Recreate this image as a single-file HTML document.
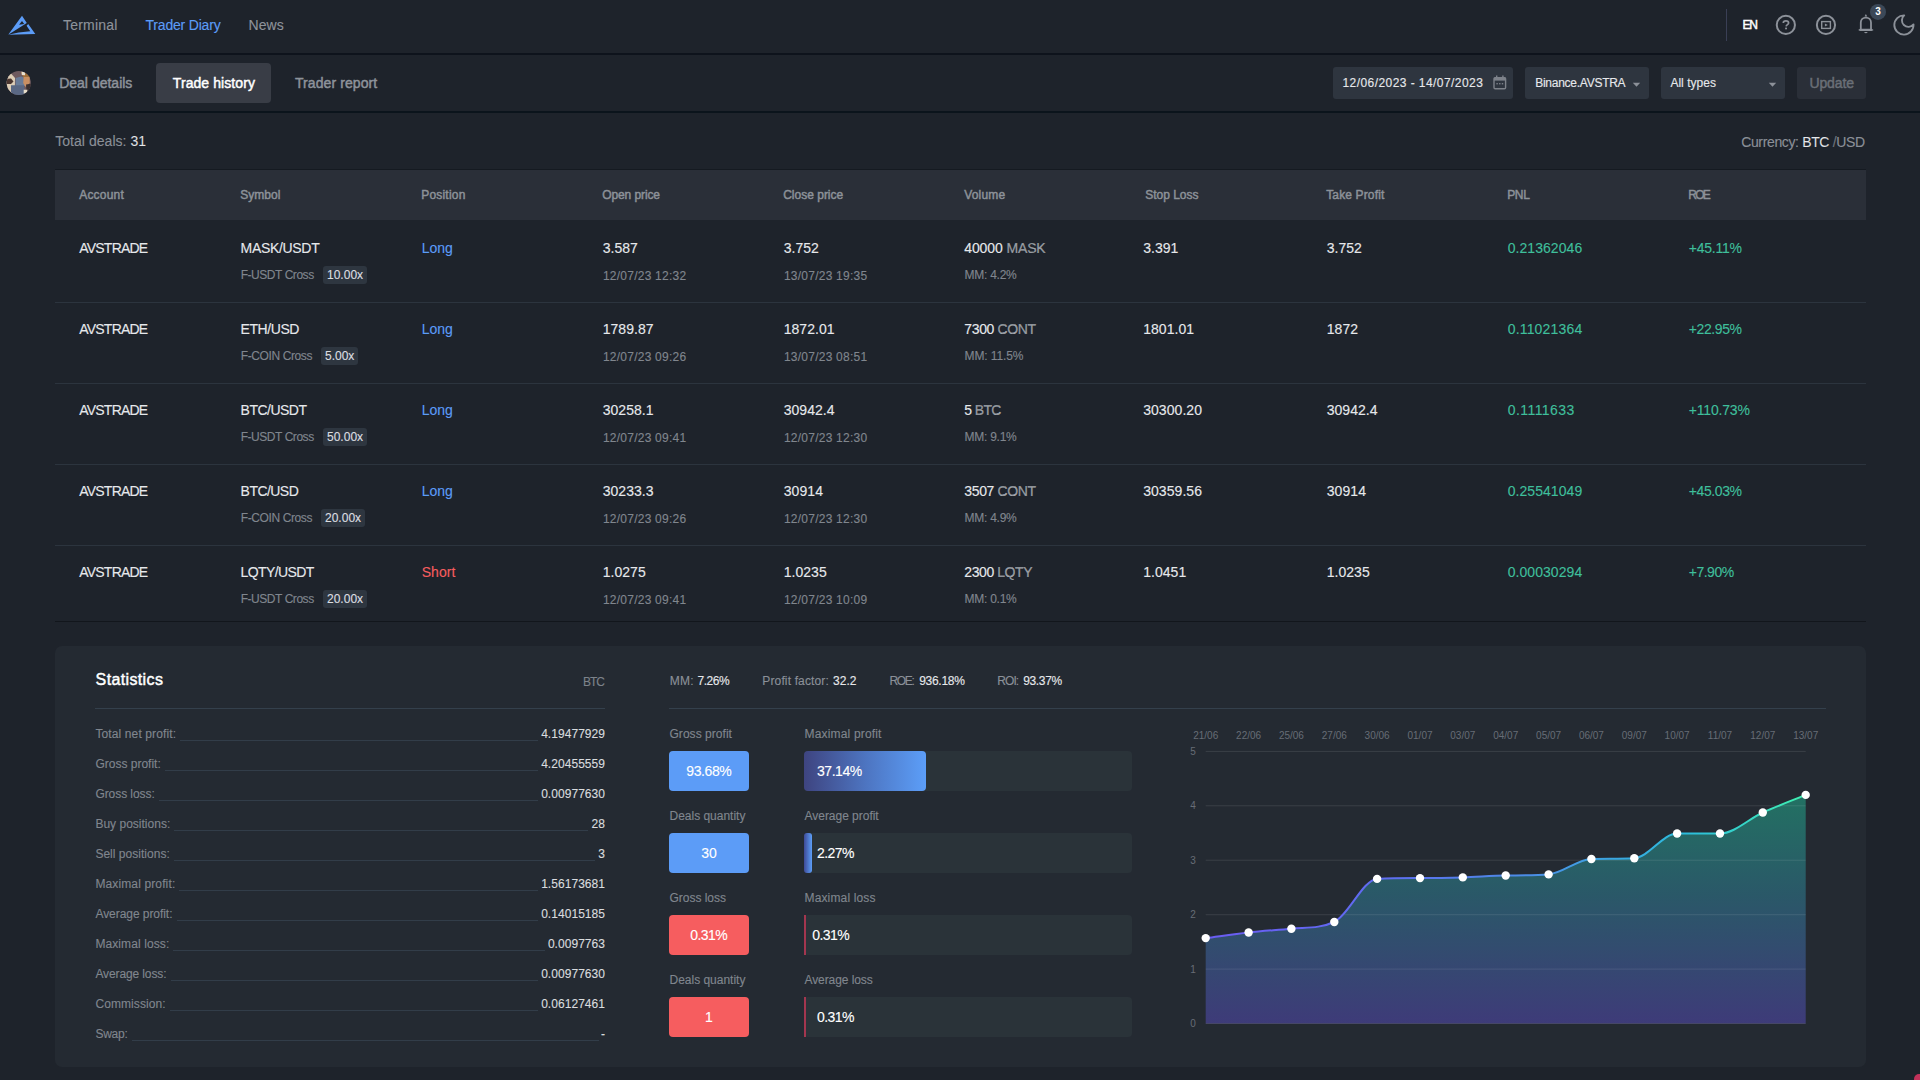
<!DOCTYPE html>
<html><head><meta charset="utf-8"><title>Trader Diary</title>
<style>
html,body{margin:0;padding:0;}
body{width:1920px;height:1080px;overflow:hidden;background:#1e232b;font-family:"Liberation Sans", sans-serif;position:relative;}
.t{position:absolute;white-space:nowrap;}
.r{position:absolute;}
</style></head><body>
<div class="r" style="left:0px;top:53px;width:1920px;height:2px;background:#0e131c;border-radius:0px;"></div>
<div class="r" style="left:0px;top:111px;width:1920px;height:2px;background:#0b141c;border-radius:0px;"></div>
<svg class="r" style="left:0px;top:0px" width="44" height="44" viewBox="0 0 44 44">
<path d="M22 15.8 L26.8 22.9 L8.2 34.7 Z M22 20.9 L19 24.7 L24.2 23.9 Z" fill="#5c9cf7" fill-rule="evenodd"/>
<path d="M28.2 24 L35.3 33.9 L8.2 34.7 Q18 32.3 30.3 31.3 L26.6 25.8 Z" fill="#5c9cf7"/>
</svg>
<div class="t" style="left:63px;top:18.15px;font-size:14px;line-height:14px;color:#8e939b;font-weight:400;letter-spacing:0.196px;-webkit-text-stroke:0.12px #8e939b;">Terminal</div>
<div class="t" style="left:145.5px;top:18.15px;font-size:14px;line-height:14px;color:#5c9cf7;font-weight:400;letter-spacing:-0.192px;-webkit-text-stroke:0.12px #5c9cf7;">Trader Diary</div>
<div class="t" style="left:248.5px;top:18.15px;font-size:14px;line-height:14px;color:#8e939b;font-weight:400;letter-spacing:0.052px;-webkit-text-stroke:0.12px #8e939b;">News</div>
<div class="r" style="left:1726px;top:9px;width:1px;height:32px;background:#3a3f55;border-radius:0px;"></div>
<div class="t" style="left:1742.5px;top:19.04px;font-size:12px;line-height:12px;color:#ffffff;font-weight:400;letter-spacing:-1.375px;-webkit-text-stroke:0.45px #ffffff;">EN</div>
<svg class="r" style="left:1770px;top:0px" width="150" height="44" viewBox="0 0 150 44">
<g fill="none" stroke="#8c9199" stroke-width="2">
<circle cx="15.85" cy="24.95" r="9.1"/>
<circle cx="55.95" cy="24.95" r="9.1"/>
</g>
<rect x="51.7" y="21.6" width="8.7" height="6.8" fill="none" stroke="#8c9199" stroke-width="1.4"/>
<path d="M54.9 23.4 L57.9 25 L54.9 26.6 Z" fill="#8c9199"/>
<path d="M13.3 22.9 C13.3 21.6 14.4 20.9 15.9 20.9 C17.5 20.9 18.6 21.7 18.6 23 C18.6 24.5 16.3 24.8 16.1 26.4" fill="none" stroke="#8c9199" stroke-width="1.7"/>
<rect x="15.1" y="27.6" width="1.9" height="1.7" fill="#8c9199"/>
<g fill="none" stroke="#8c9199" stroke-width="1.8">
<path d="M90.8 29.2 L90.8 22.6 C90.8 19.5 93 17.6 95.9 17.6 C98.8 17.6 101 19.5 101 22.6 L101 29.2"/>
</g>
<path d="M88.2 29.9 L90 28.7 L101.8 28.7 L103.6 29.9 L101.8 31 L90 31 Z" fill="#8c9199"/>
<path d="M94 31.9 L97.8 31.9 Q95.9 34.4 94 31.9 Z" fill="#8c9199"/>
<path d="M95.9 14 L94.5 16.6 L97.3 16.6 Z" fill="#8c9199"/>
<path d="M134.2 15.4 A9.6 9.6 0 1 0 143.5 24.4 A6.5 6.5 0 1 1 134.2 15.4 Z" fill="none" stroke="#8c9199" stroke-width="1.9" stroke-linejoin="round"/>
<circle cx="108" cy="11.9" r="8" fill="#3b4858"/>
<text x="108" y="15.1" font-family="Liberation Sans" font-weight="700" font-size="10" fill="#ffffff" text-anchor="middle">3</text>
</svg>
<svg class="r" style="left:6px;top:70px" width="26" height="26" viewBox="0 0 26 26">
<defs><clipPath id="av"><circle cx="12.8" cy="13" r="12.1"/></clipPath></defs>
<g clip-path="url(#av)">
<rect width="26" height="26" fill="#6e5a5f"/>
<path d="M0 5 L5 3.5 L9 8 L8.8 22 L5 24 L0 22 Z" fill="#dccdb6"/>
<path d="M0 9 L5 8.6 L7.5 11.5 L5 14 L0 14 Z" fill="#4a3630"/>
<path d="M9.6 8 L15 6.5 L19.9 8 L19.9 16 L9.6 16 Z" fill="#6a7c98"/>
<path d="M14.7 2 L23.6 3 L24.5 8.6 L18 8.6 Z" fill="#a0703a"/>
<path d="M15.5 1.5 L19.2 1.2 L19 5.2 L15.8 5 Z" fill="#e8e0d0"/>
<path d="M17.7 7.1 L23.6 7.1 L23.8 13 L19.5 17.1 L17.2 13 Z" fill="#c98f62"/>
<path d="M20 14.5 L26 13.5 L26 20 L20.5 21 Z" fill="#3a3030"/>
<path d="M5 15.2 L18 15.2 L19 26 L5 26 Z" fill="#5a6884"/>
<path d="M17.7 19.7 L21.5 19.7 L20.7 23.4 L17.7 23.4 Z" fill="#e6dcc8"/>
</g></svg>
<div class="r" style="left:156px;top:63px;width:115px;height:40px;background:#393d46;border-radius:4px;"></div>
<div class="t" style="left:59.2px;top:76.15px;font-size:14px;line-height:14px;color:#8e939b;font-weight:400;letter-spacing:0.001px;-webkit-text-stroke:0.45px #8e939b;">Deal details</div>
<div class="t" style="left:172.8px;top:76.15px;font-size:14px;line-height:14px;color:#ffffff;font-weight:400;letter-spacing:0.076px;-webkit-text-stroke:0.45px #ffffff;">Trade history</div>
<div class="t" style="left:295px;top:76.15px;font-size:14px;line-height:14px;color:#8e939b;font-weight:400;letter-spacing:0.085px;-webkit-text-stroke:0.45px #8e939b;">Trader report</div>
<div class="r" style="left:1333px;top:67px;width:180px;height:32px;background:#2e353f;border-radius:3px;"></div>
<div class="t" style="left:1342.5px;top:76.64px;font-size:12px;line-height:12px;color:#e6e8eb;font-weight:400;letter-spacing:0.433px;-webkit-text-stroke:0.12px #e6e8eb;">12/06/2023 - 14/07/2023</div>
<svg class="r" style="left:1493px;top:75px" width="14" height="15" viewBox="0 0 14 15">
<rect x="1" y="2.6" width="11.6" height="11.2" rx="1.2" fill="none" stroke="#7d828a" stroke-width="1.4"/>
<rect x="1" y="2.6" width="11.6" height="3" fill="#7d828a"/>
<rect x="3" y="0.5" width="1.4" height="3" fill="#7d828a"/><rect x="9.2" y="0.5" width="1.4" height="3" fill="#7d828a"/>
<rect x="3.4" y="8" width="1.4" height="1.4" fill="#7d828a"/><rect x="6.1" y="8" width="1.4" height="1.4" fill="#7d828a"/><rect x="8.8" y="8" width="1.4" height="1.4" fill="#7d828a"/>
</svg>
<div class="r" style="left:1525px;top:67px;width:124px;height:32px;background:#2e353f;border-radius:3px;"></div>
<div class="t" style="left:1535.2px;top:76.64px;font-size:12px;line-height:12px;color:#e6e8eb;font-weight:400;letter-spacing:-0.260px;-webkit-text-stroke:0.12px #e6e8eb;">Binance.AVSTRA</div>
<svg class="r" style="left:1631.5px;top:81.5px" width="9" height="6" viewBox="0 0 9 6"><path d="M0.8 0.8 L8.2 0.8 L4.5 4.8 Z" fill="#8c9199"/></svg>
<div class="r" style="left:1661px;top:67px;width:124px;height:32px;background:#2e353f;border-radius:3px;"></div>
<div class="t" style="left:1670.4px;top:76.64px;font-size:12px;line-height:12px;color:#e6e8eb;font-weight:400;letter-spacing:0.023px;-webkit-text-stroke:0.12px #e6e8eb;">All types</div>
<svg class="r" style="left:1767.5px;top:81.5px" width="9" height="6" viewBox="0 0 9 6"><path d="M0.8 0.8 L8.2 0.8 L4.5 4.8 Z" fill="#8c9199"/></svg>
<div class="r" style="left:1797px;top:67px;width:69px;height:32px;background:#2a2f38;border-radius:3px;"></div>
<div class="t" style="left:1809.4px;top:76.15px;font-size:14px;line-height:14px;color:#6a6f77;font-weight:400;letter-spacing:-0.106px;-webkit-text-stroke:0.45px #6a6f77;">Update</div>
<div class="t" style="left:55.2px;top:134.15px;font-size:14px;line-height:14px;color:#8b9098;font-weight:400;letter-spacing:0.044px;-webkit-text-stroke:0.12px #8b9098;">Total deals: <span style="color:#e6e8eb">31</span></div>
<div class="t" style="right:55px;margin-right:0.359px;top:134.65px;font-size:14px;line-height:14px;color:#8b9098;font-weight:400;letter-spacing:-0.359px;-webkit-text-stroke:0.12px #8b9098;">Currency: <span style="color:#e6e8eb">BTC</span> <span style="color:#6b7078">/</span>USD</div>
<div class="r" style="left:55px;top:169px;width:1811px;height:1px;background:#151a21;border-radius:0px;"></div>
<div class="r" style="left:55px;top:170px;width:1811px;height:50px;background:#2a2f38;border-radius:0px;"></div>
<div class="t" style="left:79.2px;top:189.04px;font-size:12px;line-height:12px;color:#8d9299;font-weight:400;letter-spacing:0.216px;-webkit-text-stroke:0.45px #8d9299;">Account</div>
<div class="t" style="left:240.2px;top:189.04px;font-size:12px;line-height:12px;color:#8d9299;font-weight:400;letter-spacing:0.041px;-webkit-text-stroke:0.45px #8d9299;">Symbol</div>
<div class="t" style="left:421.2px;top:189.04px;font-size:12px;line-height:12px;color:#8d9299;font-weight:400;letter-spacing:0.210px;-webkit-text-stroke:0.45px #8d9299;">Position</div>
<div class="t" style="left:602.2px;top:189.04px;font-size:12px;line-height:12px;color:#8d9299;font-weight:400;letter-spacing:-0.095px;-webkit-text-stroke:0.45px #8d9299;">Open price</div>
<div class="t" style="left:783.2px;top:189.04px;font-size:12px;line-height:12px;color:#8d9299;font-weight:400;letter-spacing:0.000px;-webkit-text-stroke:0.45px #8d9299;">Close price</div>
<div class="t" style="left:964.2px;top:189.04px;font-size:12px;line-height:12px;color:#8d9299;font-weight:400;letter-spacing:0.175px;-webkit-text-stroke:0.45px #8d9299;">Volume</div>
<div class="t" style="left:1145.2px;top:189.04px;font-size:12px;line-height:12px;color:#8d9299;font-weight:400;letter-spacing:-0.008px;-webkit-text-stroke:0.45px #8d9299;">Stop Loss</div>
<div class="t" style="left:1326.2px;top:189.04px;font-size:12px;line-height:12px;color:#8d9299;font-weight:400;letter-spacing:0.142px;-webkit-text-stroke:0.45px #8d9299;">Take Profit</div>
<div class="t" style="left:1507.2px;top:189.04px;font-size:12px;line-height:12px;color:#8d9299;font-weight:400;letter-spacing:-0.344px;-webkit-text-stroke:0.45px #8d9299;">PNL</div>
<div class="t" style="left:1688.2px;top:189.04px;font-size:12px;line-height:12px;color:#8d9299;font-weight:400;letter-spacing:-1.703px;-webkit-text-stroke:0.45px #8d9299;">ROE</div>
<div class="t" style="left:79.2px;top:241.25px;font-size:14px;line-height:14px;color:#e6e8eb;font-weight:400;letter-spacing:-0.772px;-webkit-text-stroke:0.12px #e6e8eb;">AVSTRADE</div>
<div class="t" style="left:240.6px;top:241.25px;font-size:14px;line-height:14px;color:#e6e8eb;font-weight:400;letter-spacing:-0.322px;-webkit-text-stroke:0.12px #e6e8eb;">MASK/USDT</div>
<div class="t" style="left:240.7px;top:269.04px;font-size:12px;line-height:12px;color:#80868e;font-weight:400;letter-spacing:-0.453px;-webkit-text-stroke:0.12px #80868e;">F-USDT Cross</div>
<div class="r" style="left:323.2px;top:266.09999999999997px;width:43.7px;height:17.7px;background:#2e3640;border-radius:3px;"></div>
<div class="t" style="left:145.05px;width:400px;text-align:center;text-indent:0.013px;top:269.04px;font-size:12px;line-height:12px;color:#dcdee0;font-weight:400;letter-spacing:0.013px;-webkit-text-stroke:0.12px #dcdee0;">10.00x</div>
<div class="t" style="left:421.7px;top:241.25px;font-size:14px;line-height:14px;color:#5c9cf7;font-weight:400;letter-spacing:-0.010px;-webkit-text-stroke:0.12px #5c9cf7;">Long</div>
<div class="t" style="left:602.7px;top:241.25px;font-size:14px;line-height:14px;color:#e6e8eb;font-weight:400;letter-spacing:0.031px;-webkit-text-stroke:0.12px #e6e8eb;">3.587</div>
<div class="t" style="left:602.9px;top:269.84px;font-size:12px;line-height:12px;color:#80868e;font-weight:400;letter-spacing:0.243px;-webkit-text-stroke:0.12px #80868e;">12/07/23 12:32</div>
<div class="t" style="left:783.7px;top:241.25px;font-size:14px;line-height:14px;color:#e6e8eb;font-weight:400;letter-spacing:0.031px;-webkit-text-stroke:0.12px #e6e8eb;">3.752</div>
<div class="t" style="left:783.9px;top:269.84px;font-size:12px;line-height:12px;color:#80868e;font-weight:400;letter-spacing:0.243px;-webkit-text-stroke:0.12px #80868e;">13/07/23 19:35</div>
<div class="t" style="left:964.3px;top:241.25px;font-size:14px;line-height:14px;color:#e6e8eb;font-weight:400;letter-spacing:-0.123px;-webkit-text-stroke:0.12px #e6e8eb;">40000 <span style="color:#8d9299">MASK</span></div>
<div class="t" style="left:964.5px;top:268.84px;font-size:12px;line-height:12px;color:#80868e;font-weight:400;letter-spacing:-0.248px;-webkit-text-stroke:0.12px #80868e;">MM: 4.2%</div>
<div class="t" style="left:1143.2px;top:241.25px;font-size:14px;line-height:14px;color:#e6e8eb;font-weight:400;letter-spacing:0.031px;-webkit-text-stroke:0.12px #e6e8eb;">3.391</div>
<div class="t" style="left:1326.7px;top:241.25px;font-size:14px;line-height:14px;color:#e6e8eb;font-weight:400;letter-spacing:0.031px;-webkit-text-stroke:0.12px #e6e8eb;">3.752</div>
<div class="t" style="left:1507.7px;top:241.25px;font-size:14px;line-height:14px;color:#3fbf9b;font-weight:400;letter-spacing:0.061px;-webkit-text-stroke:0.12px #3fbf9b;">0.21362046</div>
<div class="t" style="left:1688.7px;top:241.25px;font-size:14px;line-height:14px;color:#3fbf9b;font-weight:400;letter-spacing:-0.208px;-webkit-text-stroke:0.12px #3fbf9b;">+45.11%</div>
<div class="r" style="left:55px;top:302px;width:1811px;height:1px;background:#2c343e;border-radius:0px;"></div>
<div class="t" style="left:79.2px;top:322.25px;font-size:14px;line-height:14px;color:#e6e8eb;font-weight:400;letter-spacing:-0.772px;-webkit-text-stroke:0.12px #e6e8eb;">AVSTRADE</div>
<div class="t" style="left:240.6px;top:322.25px;font-size:14px;line-height:14px;color:#e6e8eb;font-weight:400;letter-spacing:-0.443px;-webkit-text-stroke:0.12px #e6e8eb;">ETH/USD</div>
<div class="t" style="left:240.7px;top:350.04px;font-size:12px;line-height:12px;color:#80868e;font-weight:400;letter-spacing:-0.381px;-webkit-text-stroke:0.12px #80868e;">F-COIN Cross</div>
<div class="r" style="left:321.2px;top:347.1px;width:37px;height:17.7px;background:#2e3640;border-radius:3px;"></div>
<div class="t" style="left:139.7px;width:400px;text-align:center;text-indent:0.000px;top:350.04px;font-size:12px;line-height:12px;color:#dcdee0;font-weight:400;letter-spacing:0.000px;-webkit-text-stroke:0.12px #dcdee0;">5.00x</div>
<div class="t" style="left:421.7px;top:322.25px;font-size:14px;line-height:14px;color:#5c9cf7;font-weight:400;letter-spacing:-0.010px;-webkit-text-stroke:0.12px #5c9cf7;">Long</div>
<div class="t" style="left:602.7px;top:322.25px;font-size:14px;line-height:14px;color:#e6e8eb;font-weight:400;letter-spacing:0.049px;-webkit-text-stroke:0.12px #e6e8eb;">1789.87</div>
<div class="t" style="left:602.9px;top:350.84px;font-size:12px;line-height:12px;color:#80868e;font-weight:400;letter-spacing:0.243px;-webkit-text-stroke:0.12px #80868e;">12/07/23 09:26</div>
<div class="t" style="left:783.7px;top:322.25px;font-size:14px;line-height:14px;color:#e6e8eb;font-weight:400;letter-spacing:0.049px;-webkit-text-stroke:0.12px #e6e8eb;">1872.01</div>
<div class="t" style="left:783.9px;top:350.84px;font-size:12px;line-height:12px;color:#80868e;font-weight:400;letter-spacing:0.243px;-webkit-text-stroke:0.12px #80868e;">13/07/23 08:51</div>
<div class="t" style="left:964.3px;top:322.25px;font-size:14px;line-height:14px;color:#e6e8eb;font-weight:400;letter-spacing:-0.357px;-webkit-text-stroke:0.12px #e6e8eb;">7300 <span style="color:#8d9299">CONT</span></div>
<div class="t" style="left:964.5px;top:349.84px;font-size:12px;line-height:12px;color:#80868e;font-weight:400;letter-spacing:-0.096px;-webkit-text-stroke:0.12px #80868e;">MM: 11.5%</div>
<div class="t" style="left:1143.2px;top:322.25px;font-size:14px;line-height:14px;color:#e6e8eb;font-weight:400;letter-spacing:0.049px;-webkit-text-stroke:0.12px #e6e8eb;">1801.01</div>
<div class="t" style="left:1326.7px;top:322.25px;font-size:14px;line-height:14px;color:#e6e8eb;font-weight:400;letter-spacing:0.109px;-webkit-text-stroke:0.12px #e6e8eb;">1872</div>
<div class="t" style="left:1507.7px;top:322.25px;font-size:14px;line-height:14px;color:#3fbf9b;font-weight:400;letter-spacing:0.175px;-webkit-text-stroke:0.12px #3fbf9b;">0.11021364</div>
<div class="t" style="left:1688.7px;top:322.25px;font-size:14px;line-height:14px;color:#3fbf9b;font-weight:400;letter-spacing:-0.383px;-webkit-text-stroke:0.12px #3fbf9b;">+22.95%</div>
<div class="r" style="left:55px;top:383px;width:1811px;height:1px;background:#2c343e;border-radius:0px;"></div>
<div class="t" style="left:79.2px;top:403.25px;font-size:14px;line-height:14px;color:#e6e8eb;font-weight:400;letter-spacing:-0.772px;-webkit-text-stroke:0.12px #e6e8eb;">AVSTRADE</div>
<div class="t" style="left:240.6px;top:403.25px;font-size:14px;line-height:14px;color:#e6e8eb;font-weight:400;letter-spacing:-0.522px;-webkit-text-stroke:0.12px #e6e8eb;">BTC/USDT</div>
<div class="t" style="left:240.7px;top:431.04px;font-size:12px;line-height:12px;color:#80868e;font-weight:400;letter-spacing:-0.453px;-webkit-text-stroke:0.12px #80868e;">F-USDT Cross</div>
<div class="r" style="left:323.2px;top:428.1px;width:43.7px;height:17.7px;background:#2e3640;border-radius:3px;"></div>
<div class="t" style="left:145.05px;width:400px;text-align:center;text-indent:0.013px;top:431.04px;font-size:12px;line-height:12px;color:#dcdee0;font-weight:400;letter-spacing:0.013px;-webkit-text-stroke:0.12px #dcdee0;">50.00x</div>
<div class="t" style="left:421.7px;top:403.25px;font-size:14px;line-height:14px;color:#5c9cf7;font-weight:400;letter-spacing:-0.010px;-webkit-text-stroke:0.12px #5c9cf7;">Long</div>
<div class="t" style="left:602.7px;top:403.25px;font-size:14px;line-height:14px;color:#e6e8eb;font-weight:400;letter-spacing:0.049px;-webkit-text-stroke:0.12px #e6e8eb;">30258.1</div>
<div class="t" style="left:602.9px;top:431.84px;font-size:12px;line-height:12px;color:#80868e;font-weight:400;letter-spacing:0.243px;-webkit-text-stroke:0.12px #80868e;">12/07/23 09:41</div>
<div class="t" style="left:783.7px;top:403.25px;font-size:14px;line-height:14px;color:#e6e8eb;font-weight:400;letter-spacing:0.049px;-webkit-text-stroke:0.12px #e6e8eb;">30942.4</div>
<div class="t" style="left:783.9px;top:431.84px;font-size:12px;line-height:12px;color:#80868e;font-weight:400;letter-spacing:0.243px;-webkit-text-stroke:0.12px #80868e;">12/07/23 12:30</div>
<div class="t" style="left:964.3px;top:403.25px;font-size:14px;line-height:14px;color:#e6e8eb;font-weight:400;letter-spacing:-0.633px;-webkit-text-stroke:0.12px #e6e8eb;">5 <span style="color:#8d9299">BTC</span></div>
<div class="t" style="left:964.5px;top:430.84px;font-size:12px;line-height:12px;color:#80868e;font-weight:400;letter-spacing:-0.248px;-webkit-text-stroke:0.12px #80868e;">MM: 9.1%</div>
<div class="t" style="left:1143.2px;top:403.25px;font-size:14px;line-height:14px;color:#e6e8eb;font-weight:400;letter-spacing:0.054px;-webkit-text-stroke:0.12px #e6e8eb;">30300.20</div>
<div class="t" style="left:1326.7px;top:403.25px;font-size:14px;line-height:14px;color:#e6e8eb;font-weight:400;letter-spacing:0.049px;-webkit-text-stroke:0.12px #e6e8eb;">30942.4</div>
<div class="t" style="left:1507.7px;top:403.25px;font-size:14px;line-height:14px;color:#3fbf9b;font-weight:400;letter-spacing:0.447px;-webkit-text-stroke:0.12px #3fbf9b;">0.1111633</div>
<div class="t" style="left:1688.7px;top:403.25px;font-size:14px;line-height:14px;color:#3fbf9b;font-weight:400;letter-spacing:-0.167px;-webkit-text-stroke:0.12px #3fbf9b;">+110.73%</div>
<div class="r" style="left:55px;top:464px;width:1811px;height:1px;background:#2c343e;border-radius:0px;"></div>
<div class="t" style="left:79.2px;top:484.25px;font-size:14px;line-height:14px;color:#e6e8eb;font-weight:400;letter-spacing:-0.772px;-webkit-text-stroke:0.12px #e6e8eb;">AVSTRADE</div>
<div class="t" style="left:240.6px;top:484.25px;font-size:14px;line-height:14px;color:#e6e8eb;font-weight:400;letter-spacing:-0.547px;-webkit-text-stroke:0.12px #e6e8eb;">BTC/USD</div>
<div class="t" style="left:240.7px;top:512.04px;font-size:12px;line-height:12px;color:#80868e;font-weight:400;letter-spacing:-0.381px;-webkit-text-stroke:0.12px #80868e;">F-COIN Cross</div>
<div class="r" style="left:321.2px;top:509.1px;width:43.7px;height:17.7px;background:#2e3640;border-radius:3px;"></div>
<div class="t" style="left:143.05px;width:400px;text-align:center;text-indent:0.013px;top:512.04px;font-size:12px;line-height:12px;color:#dcdee0;font-weight:400;letter-spacing:0.013px;-webkit-text-stroke:0.12px #dcdee0;">20.00x</div>
<div class="t" style="left:421.7px;top:484.25px;font-size:14px;line-height:14px;color:#5c9cf7;font-weight:400;letter-spacing:-0.010px;-webkit-text-stroke:0.12px #5c9cf7;">Long</div>
<div class="t" style="left:602.7px;top:484.25px;font-size:14px;line-height:14px;color:#e6e8eb;font-weight:400;letter-spacing:0.049px;-webkit-text-stroke:0.12px #e6e8eb;">30233.3</div>
<div class="t" style="left:602.9px;top:512.84px;font-size:12px;line-height:12px;color:#80868e;font-weight:400;letter-spacing:0.243px;-webkit-text-stroke:0.12px #80868e;">12/07/23 09:26</div>
<div class="t" style="left:783.7px;top:484.25px;font-size:14px;line-height:14px;color:#e6e8eb;font-weight:400;letter-spacing:0.102px;-webkit-text-stroke:0.12px #e6e8eb;">30914</div>
<div class="t" style="left:783.9px;top:512.84px;font-size:12px;line-height:12px;color:#80868e;font-weight:400;letter-spacing:0.243px;-webkit-text-stroke:0.12px #80868e;">12/07/23 12:30</div>
<div class="t" style="left:964.3px;top:484.25px;font-size:14px;line-height:14px;color:#e6e8eb;font-weight:400;letter-spacing:-0.357px;-webkit-text-stroke:0.12px #e6e8eb;">3507 <span style="color:#8d9299">CONT</span></div>
<div class="t" style="left:964.5px;top:511.84px;font-size:12px;line-height:12px;color:#80868e;font-weight:400;letter-spacing:-0.248px;-webkit-text-stroke:0.12px #80868e;">MM: 4.9%</div>
<div class="t" style="left:1143.2px;top:484.25px;font-size:14px;line-height:14px;color:#e6e8eb;font-weight:400;letter-spacing:0.054px;-webkit-text-stroke:0.12px #e6e8eb;">30359.56</div>
<div class="t" style="left:1326.7px;top:484.25px;font-size:14px;line-height:14px;color:#e6e8eb;font-weight:400;letter-spacing:0.102px;-webkit-text-stroke:0.12px #e6e8eb;">30914</div>
<div class="t" style="left:1507.7px;top:484.25px;font-size:14px;line-height:14px;color:#3fbf9b;font-weight:400;letter-spacing:0.061px;-webkit-text-stroke:0.12px #3fbf9b;">0.25541049</div>
<div class="t" style="left:1688.7px;top:484.25px;font-size:14px;line-height:14px;color:#3fbf9b;font-weight:400;letter-spacing:-0.383px;-webkit-text-stroke:0.12px #3fbf9b;">+45.03%</div>
<div class="r" style="left:55px;top:545px;width:1811px;height:1px;background:#2c343e;border-radius:0px;"></div>
<div class="t" style="left:79.2px;top:565.25px;font-size:14px;line-height:14px;color:#e6e8eb;font-weight:400;letter-spacing:-0.772px;-webkit-text-stroke:0.12px #e6e8eb;">AVSTRADE</div>
<div class="t" style="left:240.6px;top:565.25px;font-size:14px;line-height:14px;color:#e6e8eb;font-weight:400;letter-spacing:-0.594px;-webkit-text-stroke:0.12px #e6e8eb;">LQTY/USDT</div>
<div class="t" style="left:240.7px;top:593.04px;font-size:12px;line-height:12px;color:#80868e;font-weight:400;letter-spacing:-0.453px;-webkit-text-stroke:0.12px #80868e;">F-USDT Cross</div>
<div class="r" style="left:323.2px;top:590.1px;width:43.7px;height:17.7px;background:#2e3640;border-radius:3px;"></div>
<div class="t" style="left:145.05px;width:400px;text-align:center;text-indent:0.013px;top:593.04px;font-size:12px;line-height:12px;color:#dcdee0;font-weight:400;letter-spacing:0.013px;-webkit-text-stroke:0.12px #dcdee0;">20.00x</div>
<div class="t" style="left:421.7px;top:565.25px;font-size:14px;line-height:14px;color:#f65d5f;font-weight:400;letter-spacing:0.055px;-webkit-text-stroke:0.12px #f65d5f;">Short</div>
<div class="t" style="left:602.7px;top:565.25px;font-size:14px;line-height:14px;color:#e6e8eb;font-weight:400;letter-spacing:0.044px;-webkit-text-stroke:0.12px #e6e8eb;">1.0275</div>
<div class="t" style="left:602.9px;top:593.84px;font-size:12px;line-height:12px;color:#80868e;font-weight:400;letter-spacing:0.243px;-webkit-text-stroke:0.12px #80868e;">12/07/23 09:41</div>
<div class="t" style="left:783.7px;top:565.25px;font-size:14px;line-height:14px;color:#e6e8eb;font-weight:400;letter-spacing:0.044px;-webkit-text-stroke:0.12px #e6e8eb;">1.0235</div>
<div class="t" style="left:783.9px;top:593.84px;font-size:12px;line-height:12px;color:#80868e;font-weight:400;letter-spacing:0.243px;-webkit-text-stroke:0.12px #80868e;">12/07/23 10:09</div>
<div class="t" style="left:964.3px;top:565.25px;font-size:14px;line-height:14px;color:#e6e8eb;font-weight:400;letter-spacing:-0.420px;-webkit-text-stroke:0.12px #e6e8eb;">2300 <span style="color:#8d9299">LQTY</span></div>
<div class="t" style="left:964.5px;top:592.84px;font-size:12px;line-height:12px;color:#80868e;font-weight:400;letter-spacing:-0.248px;-webkit-text-stroke:0.12px #80868e;">MM: 0.1%</div>
<div class="t" style="left:1143.2px;top:565.25px;font-size:14px;line-height:14px;color:#e6e8eb;font-weight:400;letter-spacing:0.044px;-webkit-text-stroke:0.12px #e6e8eb;">1.0451</div>
<div class="t" style="left:1326.7px;top:565.25px;font-size:14px;line-height:14px;color:#e6e8eb;font-weight:400;letter-spacing:0.044px;-webkit-text-stroke:0.12px #e6e8eb;">1.0235</div>
<div class="t" style="left:1507.7px;top:565.25px;font-size:14px;line-height:14px;color:#3fbf9b;font-weight:400;letter-spacing:0.061px;-webkit-text-stroke:0.12px #3fbf9b;">0.00030294</div>
<div class="t" style="left:1688.7px;top:565.25px;font-size:14px;line-height:14px;color:#3fbf9b;font-weight:400;letter-spacing:-0.475px;-webkit-text-stroke:0.12px #3fbf9b;">+7.90%</div>
<div class="r" style="left:55px;top:621px;width:1811px;height:1px;background:#12161c;border-radius:0px;"></div>
<div class="r" style="left:55px;top:646px;width:1811px;height:421px;background:#242a32;border-radius:7px;"></div>
<div class="t" style="left:95.6px;top:672.36px;font-size:16px;line-height:16px;color:#ffffff;font-weight:400;letter-spacing:0.363px;-webkit-text-stroke:0.45px #ffffff;">Statistics</div>
<div class="t" style="right:1315px;margin-right:0.938px;top:675.64px;font-size:12px;line-height:12px;color:#7d838b;font-weight:400;letter-spacing:-0.938px;-webkit-text-stroke:0.12px #7d838b;">BTC</div>
<div class="r" style="left:95px;top:708px;width:510px;height:1px;background:#34404c;border-radius:0px;"></div>
<div class="r" style="left:669px;top:708px;width:1157px;height:1px;background:#34404c;border-radius:0px;"></div>
<div class="t" style="left:95.4px;top:727.84px;font-size:12px;line-height:12px;color:#80868e;font-weight:400;letter-spacing:0.123px;-webkit-text-stroke:0.12px #80868e;">Total net profit:</div>
<div class="t" style="right:1315px;margin-right:-0.052px;top:727.84px;font-size:12px;line-height:12px;color:#d9dcdf;font-weight:400;letter-spacing:0.052px;-webkit-text-stroke:0.12px #d9dcdf;">4.19477929</div>
<div class="r" style="left:180.1px;top:740.0px;width:358.0px;height:1px;background:#323d49"></div>
<div class="t" style="left:95.4px;top:757.84px;font-size:12px;line-height:12px;color:#80868e;font-weight:400;letter-spacing:-0.001px;-webkit-text-stroke:0.12px #80868e;">Gross profit:</div>
<div class="t" style="right:1315px;margin-right:-0.052px;top:757.84px;font-size:12px;line-height:12px;color:#d9dcdf;font-weight:400;letter-spacing:0.052px;-webkit-text-stroke:0.12px #d9dcdf;">4.20455559</div>
<div class="r" style="left:164.7px;top:770.0px;width:373.4px;height:1px;background:#323d49"></div>
<div class="t" style="left:95.4px;top:787.84px;font-size:12px;line-height:12px;color:#80868e;font-weight:400;letter-spacing:-0.062px;-webkit-text-stroke:0.12px #80868e;">Gross loss:</div>
<div class="t" style="right:1315px;margin-right:-0.052px;top:787.84px;font-size:12px;line-height:12px;color:#d9dcdf;font-weight:400;letter-spacing:0.052px;-webkit-text-stroke:0.12px #d9dcdf;">0.00977630</div>
<div class="r" style="left:158.8px;top:800.0px;width:379.3px;height:1px;background:#323d49"></div>
<div class="t" style="left:95.4px;top:817.84px;font-size:12px;line-height:12px;color:#80868e;font-weight:400;letter-spacing:0.011px;-webkit-text-stroke:0.12px #80868e;">Buy positions:</div>
<div class="t" style="right:1315px;margin-right:-0.141px;top:817.84px;font-size:12px;line-height:12px;color:#d9dcdf;font-weight:400;letter-spacing:0.141px;-webkit-text-stroke:0.12px #d9dcdf;">28</div>
<div class="r" style="left:174.3px;top:830.0px;width:414.2px;height:1px;background:#323d49"></div>
<div class="t" style="left:95.4px;top:847.84px;font-size:12px;line-height:12px;color:#80868e;font-weight:400;letter-spacing:0.027px;-webkit-text-stroke:0.12px #80868e;">Sell positions:</div>
<div class="t" style="right:1315px;margin-right:-0.062px;top:847.84px;font-size:12px;line-height:12px;color:#d9dcdf;font-weight:400;letter-spacing:0.062px;-webkit-text-stroke:0.12px #d9dcdf;">3</div>
<div class="r" style="left:173.8px;top:860.0px;width:421.4px;height:1px;background:#323d49"></div>
<div class="t" style="left:95.4px;top:877.84px;font-size:12px;line-height:12px;color:#80868e;font-weight:400;letter-spacing:0.129px;-webkit-text-stroke:0.12px #80868e;">Maximal profit:</div>
<div class="t" style="right:1315px;margin-right:-0.052px;top:877.84px;font-size:12px;line-height:12px;color:#d9dcdf;font-weight:400;letter-spacing:0.052px;-webkit-text-stroke:0.12px #d9dcdf;">1.56173681</div>
<div class="r" style="left:179.2px;top:890.0px;width:358.9px;height:1px;background:#323d49"></div>
<div class="t" style="left:95.4px;top:907.84px;font-size:12px;line-height:12px;color:#80868e;font-weight:400;letter-spacing:-0.052px;-webkit-text-stroke:0.12px #80868e;">Average profit:</div>
<div class="t" style="right:1315px;margin-right:-0.052px;top:907.84px;font-size:12px;line-height:12px;color:#d9dcdf;font-weight:400;letter-spacing:0.052px;-webkit-text-stroke:0.12px #d9dcdf;">0.14015185</div>
<div class="r" style="left:176.5px;top:920.0px;width:361.6px;height:1px;background:#323d49"></div>
<div class="t" style="left:95.4px;top:937.84px;font-size:12px;line-height:12px;color:#80868e;font-weight:400;letter-spacing:0.099px;-webkit-text-stroke:0.12px #80868e;">Maximal loss:</div>
<div class="t" style="right:1315px;margin-right:-0.049px;top:937.84px;font-size:12px;line-height:12px;color:#d9dcdf;font-weight:400;letter-spacing:0.049px;-webkit-text-stroke:0.12px #d9dcdf;">0.0097763</div>
<div class="r" style="left:173.3px;top:950.0px;width:371.6px;height:1px;background:#323d49"></div>
<div class="t" style="left:95.4px;top:967.84px;font-size:12px;line-height:12px;color:#80868e;font-weight:400;letter-spacing:-0.113px;-webkit-text-stroke:0.12px #80868e;">Average loss:</div>
<div class="t" style="right:1315px;margin-right:-0.052px;top:967.84px;font-size:12px;line-height:12px;color:#d9dcdf;font-weight:400;letter-spacing:0.052px;-webkit-text-stroke:0.12px #d9dcdf;">0.00977630</div>
<div class="r" style="left:170.5px;top:980.0px;width:367.6px;height:1px;background:#323d49"></div>
<div class="t" style="left:95.4px;top:997.84px;font-size:12px;line-height:12px;color:#80868e;font-weight:400;letter-spacing:0.095px;-webkit-text-stroke:0.12px #80868e;">Commission:</div>
<div class="t" style="right:1315px;margin-right:-0.052px;top:997.84px;font-size:12px;line-height:12px;color:#d9dcdf;font-weight:400;letter-spacing:0.052px;-webkit-text-stroke:0.12px #d9dcdf;">0.06127461</div>
<div class="r" style="left:169.7px;top:1010.0px;width:368.4px;height:1px;background:#323d49"></div>
<div class="t" style="left:95.4px;top:1027.84px;font-size:12px;line-height:12px;color:#80868e;font-weight:400;letter-spacing:-0.258px;-webkit-text-stroke:0.12px #80868e;">Swap:</div>
<div class="t" style="right:1315px;margin-right:0.672px;top:1027.84px;font-size:12px;line-height:12px;color:#d9dcdf;font-weight:400;letter-spacing:-0.672px;-webkit-text-stroke:0.12px #d9dcdf;">-</div>
<div class="r" style="left:131.7px;top:1040.0px;width:466.9px;height:1px;background:#323d49"></div>
<div class="t" style="left:669.75px;top:674.84px;font-size:12px;line-height:12px;color:#8b9098;font-weight:400;letter-spacing:0.266px;-webkit-text-stroke:0.12px #8b9098;">MM:</div>
<div class="t" style="left:697.5px;top:674.84px;font-size:12px;line-height:12px;color:#e6e8eb;font-weight:400;letter-spacing:-0.461px;-webkit-text-stroke:0.12px #e6e8eb;">7.26%</div>
<div class="t" style="left:762.3px;top:674.84px;font-size:12px;line-height:12px;color:#8b9098;font-weight:400;letter-spacing:0.142px;-webkit-text-stroke:0.12px #8b9098;">Profit factor:</div>
<div class="t" style="left:833px;top:674.84px;font-size:12px;line-height:12px;color:#e6e8eb;font-weight:400;letter-spacing:0.016px;-webkit-text-stroke:0.12px #e6e8eb;">32.2</div>
<div class="t" style="left:889.4px;top:674.84px;font-size:12px;line-height:12px;color:#8b9098;font-weight:400;letter-spacing:-1.318px;-webkit-text-stroke:0.12px #8b9098;">ROE:</div>
<div class="t" style="left:919.2px;top:674.84px;font-size:12px;line-height:12px;color:#e6e8eb;font-weight:400;letter-spacing:-0.281px;-webkit-text-stroke:0.12px #e6e8eb;">936.18%</div>
<div class="t" style="left:997.3px;top:674.84px;font-size:12px;line-height:12px;color:#8b9098;font-weight:400;letter-spacing:-0.948px;-webkit-text-stroke:0.12px #8b9098;">ROI:</div>
<div class="t" style="left:1023.2px;top:674.84px;font-size:12px;line-height:12px;color:#e6e8eb;font-weight:400;letter-spacing:-0.353px;-webkit-text-stroke:0.12px #e6e8eb;">93.37%</div>
<div class="t" style="left:669.5px;top:727.64px;font-size:12px;line-height:12px;color:#80868e;font-weight:400;letter-spacing:0.038px;-webkit-text-stroke:0.12px #80868e;">Gross profit</div>
<div class="r" style="left:669px;top:751px;width:80px;height:40px;background:#5c9cf7;border-radius:4px;"></div>
<div class="t" style="left:509px;width:400px;text-align:center;text-indent:-0.412px;top:764.25px;font-size:14px;line-height:14px;color:#ffffff;font-weight:400;letter-spacing:-0.412px;-webkit-text-stroke:0.12px #ffffff;">93.68%</div>
<div class="t" style="left:804.5px;top:727.64px;font-size:12px;line-height:12px;color:#80868e;font-weight:400;letter-spacing:0.173px;-webkit-text-stroke:0.12px #80868e;">Maximal profit</div>
<div class="r" style="left:804px;top:751px;width:328px;height:40px;background:#2a3339;border-radius:4px;"></div>
<div class="r" style="left:804px;top:751px;width:122px;height:40px;background:linear-gradient(90deg,#3e4480 0%,#4d74c0 50%,#5c9ef8 100%);border-radius:4px;"></div>
<div class="t" style="left:816.9px;top:764.25px;font-size:14px;line-height:14px;color:#ffffff;font-weight:400;letter-spacing:-0.412px;-webkit-text-stroke:0.12px #ffffff;">37.14%</div>
<div class="t" style="left:669.5px;top:809.64px;font-size:12px;line-height:12px;color:#80868e;font-weight:400;letter-spacing:-0.012px;-webkit-text-stroke:0.12px #80868e;">Deals quantity</div>
<div class="r" style="left:669px;top:833px;width:80px;height:40px;background:#5c9cf7;border-radius:4px;"></div>
<div class="t" style="left:509px;width:400px;text-align:center;text-indent:0.172px;top:846.25px;font-size:14px;line-height:14px;color:#ffffff;font-weight:400;letter-spacing:0.172px;-webkit-text-stroke:0.12px #ffffff;">30</div>
<div class="t" style="left:804.5px;top:809.64px;font-size:12px;line-height:12px;color:#80868e;font-weight:400;letter-spacing:-0.024px;-webkit-text-stroke:0.12px #80868e;">Average profit</div>
<div class="r" style="left:804px;top:833px;width:328px;height:40px;background:#2a3339;border-radius:4px;"></div>
<div class="r" style="left:804px;top:833px;width:8px;height:40px;background:linear-gradient(90deg,#3e4a96,#5c9ef8);border-radius:3px;"></div>
<div class="t" style="left:816.9px;top:846.25px;font-size:14px;line-height:14px;color:#ffffff;font-weight:400;letter-spacing:-0.535px;-webkit-text-stroke:0.12px #ffffff;">2.27%</div>
<div class="t" style="left:669.5px;top:891.64px;font-size:12px;line-height:12px;color:#80868e;font-weight:400;letter-spacing:-0.023px;-webkit-text-stroke:0.12px #80868e;">Gross loss</div>
<div class="r" style="left:669px;top:915px;width:80px;height:40px;background:#f65d5f;border-radius:4px;"></div>
<div class="t" style="left:509px;width:400px;text-align:center;text-indent:-0.535px;top:928.25px;font-size:14px;line-height:14px;color:#ffffff;font-weight:400;letter-spacing:-0.535px;-webkit-text-stroke:0.12px #ffffff;">0.31%</div>
<div class="t" style="left:804.5px;top:891.64px;font-size:12px;line-height:12px;color:#80868e;font-weight:400;letter-spacing:0.146px;-webkit-text-stroke:0.12px #80868e;">Maximal loss</div>
<div class="r" style="left:804px;top:915px;width:328px;height:40px;background:#2a3339;border-radius:4px;"></div>
<div class="r" style="left:804px;top:915px;width:1.5px;height:40px;background:#a3364f;border-radius:0px;"></div>
<div class="t" style="left:812.2px;top:928.25px;font-size:14px;line-height:14px;color:#ffffff;font-weight:400;letter-spacing:-0.535px;-webkit-text-stroke:0.12px #ffffff;">0.31%</div>
<div class="t" style="left:669.5px;top:973.64px;font-size:12px;line-height:12px;color:#80868e;font-weight:400;letter-spacing:-0.012px;-webkit-text-stroke:0.12px #80868e;">Deals quantity</div>
<div class="r" style="left:669px;top:997px;width:80px;height:40px;background:#f65d5f;border-radius:4px;"></div>
<div class="t" style="left:509px;width:400px;text-align:center;text-indent:0.078px;top:1010.25px;font-size:14px;line-height:14px;color:#ffffff;font-weight:400;letter-spacing:0.078px;-webkit-text-stroke:0.12px #ffffff;">1</div>
<div class="t" style="left:804.5px;top:973.64px;font-size:12px;line-height:12px;color:#80868e;font-weight:400;letter-spacing:-0.084px;-webkit-text-stroke:0.12px #80868e;">Average loss</div>
<div class="r" style="left:804px;top:997px;width:328px;height:40px;background:#2a3339;border-radius:4px;"></div>
<div class="r" style="left:804px;top:997px;width:1.5px;height:40px;background:#a3364f;border-radius:0px;"></div>
<div class="t" style="left:816.9px;top:1010.25px;font-size:14px;line-height:14px;color:#ffffff;font-weight:400;letter-spacing:-0.535px;-webkit-text-stroke:0.12px #ffffff;">0.31%</div>
<svg class="r" style="left:0;top:0" width="1920" height="1080" viewBox="0 0 1920 1080"><defs><linearGradient id="fillg" x1="0" y1="790" x2="0" y2="1024" gradientUnits="userSpaceOnUse"><stop offset="0" stop-color="#227262"/><stop offset="0.45" stop-color="#2a5868"/><stop offset="1" stop-color="#3e3b79"/></linearGradient><linearGradient id="lineg" x1="1205" y1="0" x2="1806" y2="0" gradientUnits="userSpaceOnUse"><stop offset="0" stop-color="#6b5cf3"/><stop offset="0.3" stop-color="#5f6cf0"/><stop offset="0.55" stop-color="#4a8fe6"/><stop offset="0.8" stop-color="#2cbcdc"/><stop offset="1" stop-color="#40f0b0"/></linearGradient></defs><path d="M1205.70,938.10 C1219.99,936.23 1234.27,934.07 1248.56,932.50 C1262.84,930.93 1277.13,930.08 1291.41,928.70 C1305.70,927.32 1319.99,928.56 1334.27,922.00 C1348.56,915.44 1362.84,879.70 1377.13,878.90 C1391.41,878.10 1405.70,878.13 1419.99,878.10 C1434.27,878.07 1448.56,877.83 1462.84,877.40 C1477.13,876.97 1491.41,875.70 1505.70,875.50 C1519.99,875.30 1534.27,875.48 1548.56,874.40 C1562.84,873.32 1577.13,859.43 1591.41,859.00 C1605.70,858.57 1619.99,858.88 1634.27,858.20 C1648.56,857.52 1662.84,833.50 1677.13,833.50 C1691.41,833.50 1705.70,833.50 1719.99,833.50 C1734.27,833.50 1748.56,818.93 1762.84,812.50 C1777.13,806.07 1791.41,800.77 1805.70,794.90 L1805.7,1023.5 L1205.7,1023.5 Z" fill="url(#fillg)"/><rect x="1205.7" y="1023.0" width="600" height="1" fill="#ffffff" fill-opacity="0.1"/><rect x="1205.7" y="968.6" width="600" height="1" fill="#ffffff" fill-opacity="0.1"/><rect x="1205.7" y="914.2" width="600" height="1" fill="#ffffff" fill-opacity="0.1"/><rect x="1205.7" y="859.7" width="600" height="1" fill="#ffffff" fill-opacity="0.1"/><rect x="1205.7" y="805.3" width="600" height="1" fill="#ffffff" fill-opacity="0.1"/><rect x="1205.7" y="750.9" width="600" height="1" fill="#ffffff" fill-opacity="0.1"/><path d="M1205.70,938.10 C1219.99,936.23 1234.27,934.07 1248.56,932.50 C1262.84,930.93 1277.13,930.08 1291.41,928.70 C1305.70,927.32 1319.99,928.56 1334.27,922.00 C1348.56,915.44 1362.84,879.70 1377.13,878.90 C1391.41,878.10 1405.70,878.13 1419.99,878.10 C1434.27,878.07 1448.56,877.83 1462.84,877.40 C1477.13,876.97 1491.41,875.70 1505.70,875.50 C1519.99,875.30 1534.27,875.48 1548.56,874.40 C1562.84,873.32 1577.13,859.43 1591.41,859.00 C1605.70,858.57 1619.99,858.88 1634.27,858.20 C1648.56,857.52 1662.84,833.50 1677.13,833.50 C1691.41,833.50 1705.70,833.50 1719.99,833.50 C1734.27,833.50 1748.56,818.93 1762.84,812.50 C1777.13,806.07 1791.41,800.77 1805.70,794.90" fill="none" stroke="url(#lineg)" stroke-width="2"/><circle cx="1205.7" cy="938.1" r="4.2" fill="#ffffff"/><circle cx="1248.6" cy="932.5" r="4.2" fill="#ffffff"/><circle cx="1291.4" cy="928.7" r="4.2" fill="#ffffff"/><circle cx="1334.3" cy="922.0" r="4.2" fill="#ffffff"/><circle cx="1377.1" cy="878.9" r="4.2" fill="#ffffff"/><circle cx="1420.0" cy="878.1" r="4.2" fill="#ffffff"/><circle cx="1462.8" cy="877.4" r="4.2" fill="#ffffff"/><circle cx="1505.7" cy="875.5" r="4.2" fill="#ffffff"/><circle cx="1548.6" cy="874.4" r="4.2" fill="#ffffff"/><circle cx="1591.4" cy="859.0" r="4.2" fill="#ffffff"/><circle cx="1634.3" cy="858.2" r="4.2" fill="#ffffff"/><circle cx="1677.1" cy="833.5" r="4.2" fill="#ffffff"/><circle cx="1720.0" cy="833.5" r="4.2" fill="#ffffff"/><circle cx="1762.8" cy="812.5" r="4.2" fill="#ffffff"/><circle cx="1805.7" cy="794.9" r="4.2" fill="#ffffff"/><text x="1205.7" y="739.3" font-family="Liberation Sans" font-size="10" fill="#676d76" text-anchor="middle">21/06</text><text x="1248.6" y="739.3" font-family="Liberation Sans" font-size="10" fill="#676d76" text-anchor="middle">22/06</text><text x="1291.4" y="739.3" font-family="Liberation Sans" font-size="10" fill="#676d76" text-anchor="middle">25/06</text><text x="1334.3" y="739.3" font-family="Liberation Sans" font-size="10" fill="#676d76" text-anchor="middle">27/06</text><text x="1377.1" y="739.3" font-family="Liberation Sans" font-size="10" fill="#676d76" text-anchor="middle">30/06</text><text x="1420.0" y="739.3" font-family="Liberation Sans" font-size="10" fill="#676d76" text-anchor="middle">01/07</text><text x="1462.8" y="739.3" font-family="Liberation Sans" font-size="10" fill="#676d76" text-anchor="middle">03/07</text><text x="1505.7" y="739.3" font-family="Liberation Sans" font-size="10" fill="#676d76" text-anchor="middle">04/07</text><text x="1548.6" y="739.3" font-family="Liberation Sans" font-size="10" fill="#676d76" text-anchor="middle">05/07</text><text x="1591.4" y="739.3" font-family="Liberation Sans" font-size="10" fill="#676d76" text-anchor="middle">06/07</text><text x="1634.3" y="739.3" font-family="Liberation Sans" font-size="10" fill="#676d76" text-anchor="middle">09/07</text><text x="1677.1" y="739.3" font-family="Liberation Sans" font-size="10" fill="#676d76" text-anchor="middle">10/07</text><text x="1720.0" y="739.3" font-family="Liberation Sans" font-size="10" fill="#676d76" text-anchor="middle">11/07</text><text x="1762.8" y="739.3" font-family="Liberation Sans" font-size="10" fill="#676d76" text-anchor="middle">12/07</text><text x="1805.7" y="739.3" font-family="Liberation Sans" font-size="10" fill="#676d76" text-anchor="middle">13/07</text><text x="1193" y="1027.1" font-family="Liberation Sans" font-size="10" fill="#676d76" text-anchor="middle">0</text><text x="1193" y="972.7" font-family="Liberation Sans" font-size="10" fill="#676d76" text-anchor="middle">1</text><text x="1193" y="918.3" font-family="Liberation Sans" font-size="10" fill="#676d76" text-anchor="middle">2</text><text x="1193" y="863.8" font-family="Liberation Sans" font-size="10" fill="#676d76" text-anchor="middle">3</text><text x="1193" y="809.4" font-family="Liberation Sans" font-size="10" fill="#676d76" text-anchor="middle">4</text><text x="1193" y="755.0" font-family="Liberation Sans" font-size="10" fill="#676d76" text-anchor="middle">5</text></svg>
<div class="r" style="left:1914px;top:1074px;width:10px;height:10px;background:#c2325a;border-radius:5px;"></div>
</body></html>
